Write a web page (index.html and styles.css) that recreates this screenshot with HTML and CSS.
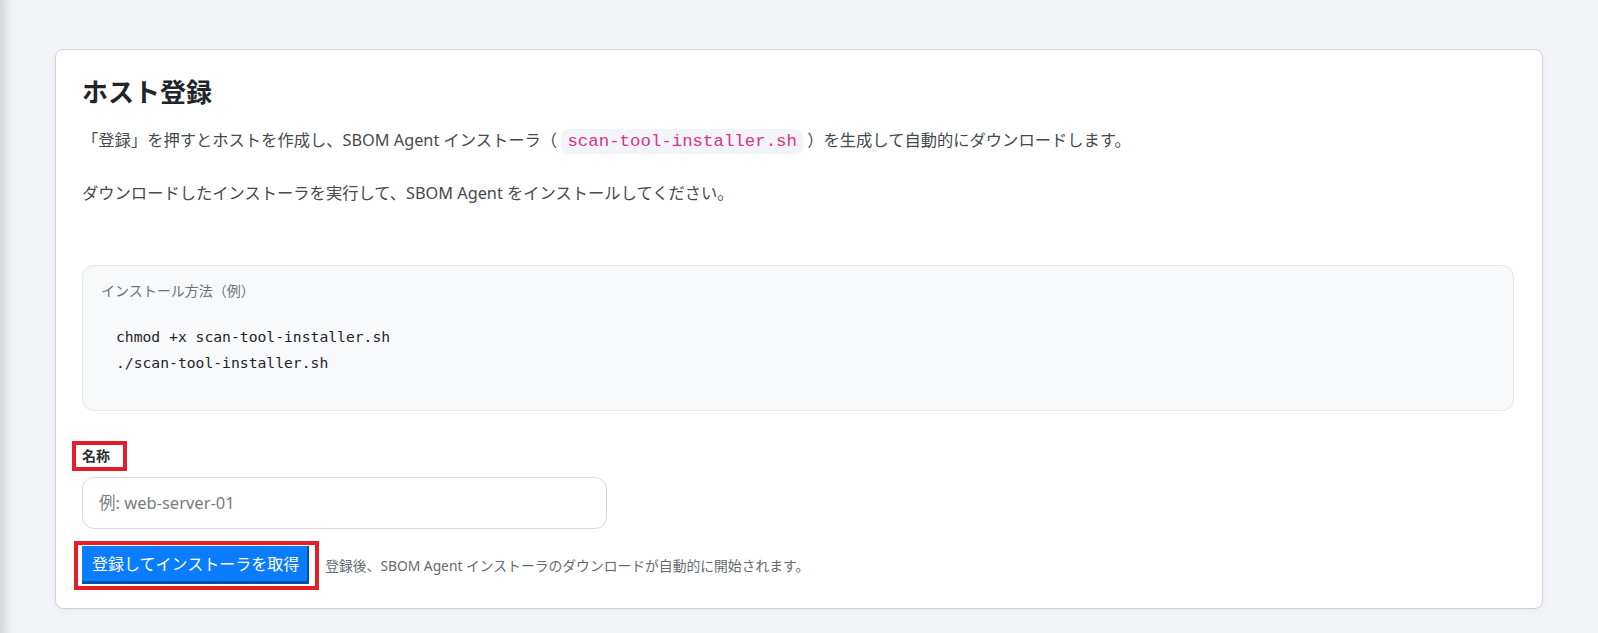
FILE: index.html
```html
<!DOCTYPE html>
<html lang="ja">
<head>
  <meta charset="UTF-8" />
  <title>ホスト登録</title>
  <meta name="viewport" content="width=device-width, initial-scale=1.0" />
  <link rel="stylesheet" href="styles.css">
</head>
<body>

<!-- Host registration card -->
<div class="card">
  <h1>ホスト登録</h1>
  <p class="lead">「登録」を押すとホストを作成し、SBOM Agent インストーラ（ <code>scan-tool-installer.sh</code> ）を生成して自動的にダウンロードします。</p>
  <p class="lead">ダウンロードしたインストーラを実行して、SBOM Agent をインストールしてください。</p>

  <div class="howto">
    <div class="howto-title">インストール方法（例）</div>
    <pre>chmod +x scan-tool-installer.sh
./scan-tool-installer.sh</pre>
  </div>

  <form class="host-form" onsubmit="return false;">
    <span class="mark mark-label"><label for="hostName">名称</label></span>
    <input type="text" id="hostName" placeholder="例: web-server-01">
    <div class="actions">
      <span class="mark mark-btn"><button type="submit">登録してインストーラを取得</button></span>
      <span class="hint">登録後、SBOM Agent インストーラのダウンロードが自動的に開始されます。</span>
    </div>
  </form>
</div>

</body>
</html>
```

FILE: styles.css
```css
* {
  margin: 0; padding: 0; box-sizing: border-box;
  font-family: "Noto Sans", "Noto Sans CJK JP", sans-serif;
}

body {
  background-color: #f3f4f8;
  padding: 49px 55px 25px 55px;
  min-height: 100vh;
  box-shadow: inset 12px 0 10px -6px rgba(0,0,0,0.12);
}

.card {
  background: white;
  border: 1px solid #d3d4d8;
  border-radius: 8px;
  box-shadow: 0 2px 10px rgba(0,0,0,0.04);
  padding: 26px 28px 18px 26px;
}

h1 {
  font-size: 26px;
  font-weight: 700;
  color: #212529;
  line-height: 1.3;
  margin-bottom: 18px;
}

.lead {
  font-size: 16.3px;
  color: #454a50;
  line-height: 24px;
  margin-bottom: 27px;
}

code {
  font-family: "Liberation Mono", monospace;
  font-size: 17.4px;
  color: #d63384;
  background: #f3f4f8;
  border-radius: 8px;
  padding: 3px 6px;
}

.howto {
  margin-top: 60px;
  background: #f8f9fb;
  border: 1px solid #e4e6ea;
  border-radius: 12px;
  padding: 14px 18px 20px 18px;
  height: 146px;
}

.howto-title {
  font-size: 14px;
  color: #6c7177;
}

.howto pre {
  font-family: "DejaVu Sans Mono", monospace;
  font-size: 14.7px;
  line-height: 26px;
  color: #1f2328;
  margin-top: 24px;
  padding-left: 15px;
}

.host-form {
  margin-top: 30px;
}

.mark {
  display: inline-block;
  border: 4px solid #e41e26;
}

.mark-label {
  padding: 0 13px 0 6px;
  margin-left: -10px;
}

label {
  display: block;
  font-size: 14px;
  font-weight: 700;
  color: #2b2f33;
  line-height: 22px;
}

input {
  display: block;
  width: 525px;
  height: 52px;
  margin-top: 6px;
  padding: 0 16px;
  font-size: 16.5px;
  color: #333;
  border: 1px solid #d5d9e2;
  border-radius: 12px;
  outline: none;
}

input::placeholder {
  color: #777b80;
}

.actions {
  display: flex;
  align-items: center;
  gap: 6px;
  margin-top: 12px;
}

.mark-btn {
  padding: 1px 6px 2px 4px;
  margin-left: -8px;
}

button {
  display: block;
  height: 38px;
  padding: 0 8px 0 10px;
  background: #0a7cff;
  color: white;
  font-size: 16px;
  border: none;
  border-right: 2px solid #0550a8;
  border-bottom: 3px solid #0550a8;
  cursor: pointer;
}

.hint {
  font-size: 13.8px;
  color: #666a70;
}
```
